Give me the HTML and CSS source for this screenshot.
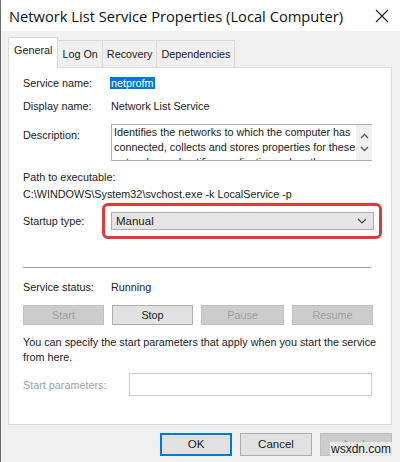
FILE: index.html
```html
<!DOCTYPE html>
<html lang="en">
<head>
    <meta charset="UTF-8">
    <title>Network List Service Properties</title>
    <link rel="stylesheet" href="styles.css">
</head>
<body>
    <div class="window">
        <div class="titlebar">
            <span class="title">Network List Service Properties (Local Computer)</span>
            <svg class="close" width="14" height="14" viewBox="0 0 14 14">
                <path d="M1 1 L13 13 M13 1 L1 13" stroke="#222" stroke-width="1.2" fill="none"/>
            </svg>
        </div>

        <div class="dialog">
            <div class="tabs">
                <div class="tab active">General</div>
                <div class="tab">Log On</div>
                <div class="tab">Recovery</div>
                <div class="tab">Dependencies</div>
            </div>

            <div class="panel">
                <div class="row row-name">
                    <span class="label">Service name:</span>
                    <span class="selected">netprofm</span>
                </div>
                <div class="row row-display">
                    <span class="label">Display name:</span>
                    <span>Network List Service</span>
                </div>
                <div class="row row-desc">
                    <span class="label desc-label">Description:</span>
                    <div class="desc-box">
                        <div class="desc-text">Identifies the networks to which the computer has connected, collects and stores properties for these networks, and notifies applications when these properties change.</div>
                        <div class="scroll">
                            <svg width="9" height="6" viewBox="0 0 9 6"><path d="M1 5 L4.5 1.5 L8 5" stroke="#555" stroke-width="1.3" fill="none"/></svg>
                            <svg width="9" height="6" viewBox="0 0 9 6"><path d="M1 1 L4.5 4.5 L8 1" stroke="#555" stroke-width="1.3" fill="none"/></svg>
                        </div>
                    </div>
                </div>
                <div class="path-label">Path to executable:</div>
                <div class="path">C:\WINDOWS\System32\svchost.exe -k LocalService -p</div>
                <div class="row row-startup">
                    <span class="label">Startup type:</span>
                    <div class="highlight">
                        <div class="select">
                            <span>Manual</span>
                            <svg width="10" height="6" viewBox="0 0 10 6"><path d="M1 1 L5 5 L9 1" stroke="#444" stroke-width="1.2" fill="none"/></svg>
                        </div>
                    </div>
                </div>

                <div class="separator"></div>

                <div class="row row-status">
                    <span class="label">Service status:</span>
                    <span>Running</span>
                </div>
                <div class="buttons">
                    <div class="btn disabled">Start</div>
                    <div class="btn">Stop</div>
                    <div class="btn disabled">Pause</div>
                    <div class="btn disabled">Resume</div>
                </div>
                <p class="hint">You can specify the start parameters that apply when you start the service from here.</p>
                <div class="row row-params">
                    <span class="label muted">Start parameters:</span>
                    <div class="params-input"></div>
                </div>
            </div>

            <div class="footer">
                <div class="btn footer-btn default">OK</div>
                <div class="btn footer-btn">Cancel</div>
                <div class="btn footer-btn disabled">Apply</div>
                <span class="watermark">wsxdn.com</span>
            </div>
        </div>
    </div>
</body>
</html>
```

FILE: styles.css
```css
* {
    margin: 0;
    padding: 0;
    box-sizing: border-box;
}

body {
    width: 400px;
    height: 462px;
    overflow: hidden;
    font-family: 'Liberation Sans', Arial, sans-serif;
    font-size: 10.8px;
    color: #1a1a1a;
    background: #f0f0f0;
}

.window {
    height: 462px;
    border-left: 1px solid #6b6b6b;
    background: #f0f0f0;
}

.titlebar {
    height: 31px;
    background: #fff;
    display: flex;
    align-items: center;
    justify-content: space-between;
    padding: 0 11px 0 8px;
}

.title {
    font-family: 'Open Sans', sans-serif;
    font-size: 14.7px;
    color: #111;
}

.dialog {
    padding: 6px 8px 0 7px;
}

.tabs {
    display: flex;
    align-items: flex-end;
    height: 30px;
}

.tab {
    height: 27px;
    padding: 0 4px;
    line-height: 26px;
    background: #f0f0f0;
    border: 1px solid #d9d9d9;
    border-bottom: none;
    margin-left: -1px;
}

.tab.active {
    height: 31px;
    line-height: 24px;
    padding: 0 5px;
    background: #fff;
    margin-left: 0;
    margin-bottom: -1px;
    position: relative;
    z-index: 1;
}

.panel {
    background: #fff;
    border: 1px solid #d9d9d9;
    height: 358px;
    padding: 0 19px 0 14px;
}

.row {
    display: flex;
    align-items: center;
}

.label {
    width: 88px;
    flex-shrink: 0;
}

.row-name {
    margin-top: 7px;
    height: 15px;
}

.selected {
    background: #0078d7;
    color: #fff;
    padding: 0 1px;
    margin-left: -1px;
}

.row-display {
    margin-top: 8px;
    height: 15px;
}

.row-desc {
    margin-top: 11px;
    align-items: flex-start;
}

.desc-label {
    padding-top: 5px;
}

.desc-box {
    width: 263px;
    height: 37px;
    border: 1px solid #adadad;
    border-right: none;
    display: flex;
    overflow: hidden;
}

.desc-text {
    flex: 1;
    padding: 0 0 0 2px;
    line-height: 15px;
}

.scroll {
    width: 16px;
    background: #f0f0f0;
    display: flex;
    flex-direction: column;
    justify-content: space-around;
    align-items: center;
    padding: 4px 0;
}

.path-label {
    margin-top: 8px;
    line-height: 16px;
}

.path {
    line-height: 16px;
    margin-top: 1px;
}

.row-startup {
    margin-top: 1px;
}

.highlight {
    margin-left: -9px;
    border: 3px solid #e0383b;
    border-radius: 6px;
    padding: 6px 5px 6px 6px;
}

.select {
    width: 263px;
    height: 18px;
    background: #e5e5e5;
    border: 1px solid #adadad;
    display: flex;
    align-items: center;
    justify-content: space-between;
    padding: 0 6px 0 4px;
    font-size: 11.5px;
}

.separator {
    margin-top: 28px;
    border-top: 1px solid #a0a0a0;
    width: 348px;
}

.row-status {
    margin-top: 11px;
    height: 16px;
}

.buttons {
    margin-top: 10px;
    display: flex;
    justify-content: space-between;
    width: 350px;
}

.btn {
    height: 20px;
    width: 81px;
    border: 1px solid #adadad;
    background: #e1e1e1;
    text-align: center;
    line-height: 18px;
}

.buttons .btn:nth-child(3) {
    width: 83px;
}

.btn.disabled {
    color: #a0a0a0;
    background: #cccccc;
    border-color: #bfbfbf;
}

.hint {
    margin-top: 10px;
    line-height: 15px;
    width: 360px;
}

.row-params {
    margin-top: 8px;
}

.label.muted {
    color: #a0a0a0;
    width: 106px;
}

.params-input {
    width: 245px;
    height: 23px;
    border: 1px solid #cfcfcf;
    background: #fff;
}

.footer {
    display: flex;
    justify-content: flex-end;
    gap: 8px;
    margin-top: 8px;
    position: relative;
}

.footer-btn {
    width: 72px;
    height: 23px;
    line-height: 21px;
    font-size: 11.5px;
}

.footer-btn.default {
    border: 2px solid #0078d7;
    line-height: 19px;
}

.watermark {
    position: absolute;
    right: 0;
    bottom: 0;
    font-size: 12px;
    color: #222;
    background: rgba(255, 255, 255, 0.6);
    line-height: 14px;
    padding: 0 1px;
}
```
